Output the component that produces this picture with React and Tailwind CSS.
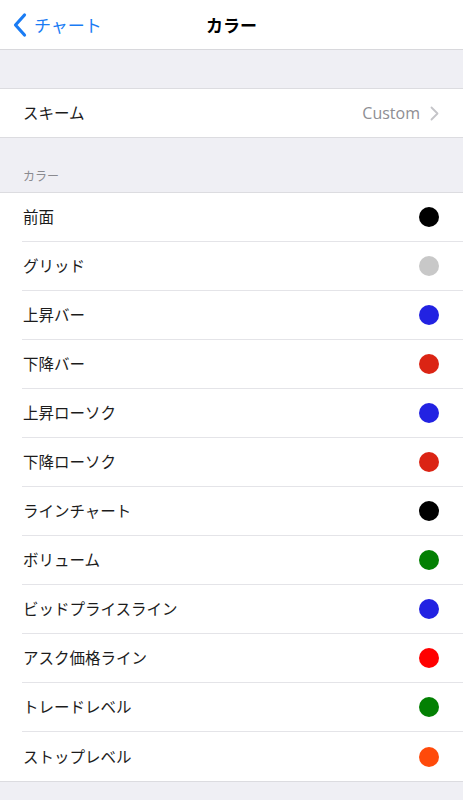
import React from 'react';

const colors = [
  { name: '前面', color: '#000000' },
  { name: 'グリッド', color: '#c8c8c8' },
  { name: '上昇バー', color: '#2222e2' },
  { name: '下降バー', color: '#db2414' },
  { name: '上昇ローソク', color: '#2222e2' },
  { name: '下降ローソク', color: '#db2414' },
  { name: 'ラインチャート', color: '#000000' },
  { name: 'ボリューム', color: '#038003' },
  { name: 'ビッドプライスライン', color: '#2222e2' },
  { name: 'アスク価格ライン', color: '#ff0000' },
  { name: 'トレードレベル', color: '#038003' },
  { name: 'ストップレベル', color: '#ff4a0a' },
];

const App = () => {
  return (
    <div
      className="min-h-[800px] bg-[#efeff4] text-[#1c1c1c]"
      style={{ fontFamily: '"Noto Sans CJK JP", "Noto Sans", sans-serif' }}
    >
      {/* Nav bar */}
      <div className="relative h-[50px] bg-white border-b border-[#d8d8dc] flex items-center justify-center">
        <div className="absolute left-[12px] top-0 h-full flex items-center text-[#1a7cf4]">
          <svg width="16" height="26" viewBox="0 0 16 26" fill="none">
            <path d="M12.5 3 L3.5 13 L12.5 23" stroke="currentColor" strokeWidth="3.2" strokeLinecap="round" strokeLinejoin="round" />
          </svg>
          <span className="ml-[6px] text-[17px]">チャート</span>
        </div>
        <h1 className="text-[17px] font-bold text-black">カラー</h1>
      </div>

      <div className="h-[38px]" />

      {/* Scheme */}
      <div className="bg-white border-y border-[#dcdce0] h-[50px] flex items-center justify-between pl-[23px] pr-[24px]">
        <span className="text-[15.5px]">スキーム</span>
        <div className="flex items-center gap-[10px] text-[#8e8e93]">
          <span className="text-[16px]" style={{ fontFamily: '"Open Sans", "Noto Sans", sans-serif' }}>Custom</span>
          <svg width="9" height="15" viewBox="0 0 9 15" fill="none">
            <path d="M1.5 1.5 L7.5 7.5 L1.5 13.5" stroke="#c4c4c8" strokeWidth="1.8" strokeLinecap="round" strokeLinejoin="round" />
          </svg>
        </div>
      </div>

      <div className="h-[54px] flex items-end px-[23px] pb-[7px]">
        <span className="text-[12px] text-[#8a8a8f]">カラー</span>
      </div>

      {/* Colors */}
      <div className="bg-white border-y border-[#dcdce0]">
        {colors.map((c, i) => (
          <div key={i} className="pl-[22px]">
            <div
              className={`h-[49px] flex items-center justify-between pr-[24px] ${
                i < colors.length - 1 ? 'border-b border-[#e4e4e8]' : ''
              }`}
            >
              <span className="text-[15.5px] pl-[1px]">{c.name}</span>
              <span
                className="w-[20px] h-[20px] rounded-full"
                style={{ backgroundColor: c.color }}
              />
            </div>
          </div>
        ))}
      </div>
    </div>
  );
};

export default App;
